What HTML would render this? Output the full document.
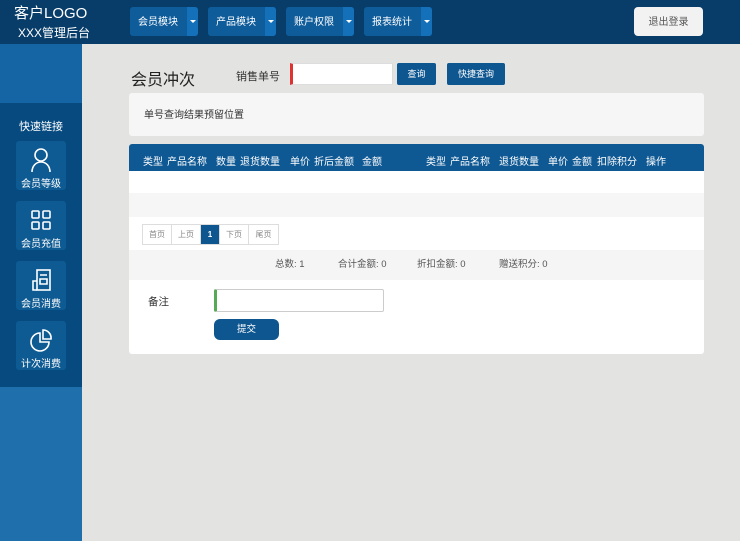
<!DOCTYPE html>
<html><head><meta charset="utf-8"><style>
*{margin:0;padding:0;box-sizing:border-box}
body{width:740px;height:541px;overflow:hidden;background:#e3e3e1;font-family:"Liberation Sans","Noto Sans CJK SC",sans-serif;position:relative;font-size:10px;color:#333}
.hdr{position:absolute;left:0;top:0;width:740px;height:44px;background:#083d69}
.logo{position:absolute;left:14px;top:6px;color:#fff;font-size:15px;line-height:16px}
.logo2{position:absolute;left:18px;top:24px;color:#fff;font-size:12px}
.nav{position:absolute;top:7px;height:29px;background:#0f5c9b;border-radius:3px;color:#fff;font-size:10px;line-height:31px;padding-left:8px}
.nav .ar{position:absolute;right:0;top:0;width:11px;height:29px;background:#1470b8;border-radius:0 3px 3px 0}
.nav .ar:after{content:"";position:absolute;left:3px;top:13px;border:3px solid transparent;border-top:3px solid #fff}
.logout{position:absolute;left:634px;top:7px;width:69px;height:29px;background:#f2f2f2;border-radius:4px;color:#555;font-size:10px;line-height:31px;text-align:center}
.side{position:absolute;left:0;top:44px;width:82px;height:497px;background:#1e6fab}
.sideTop{position:absolute;left:0;top:44px;width:82px;height:59px;background:#1565a5}
.panel{position:absolute;left:0;top:103px;width:82px;height:284px;background:#064a7f}
.ql{position:absolute;left:0;top:118px;width:82px;text-align:center;color:#fff;font-size:11px}
.btn{position:absolute;left:16px;width:50px;height:49px;background:#0e5a92;border-radius:3px;color:#fff;font-size:10px;text-align:center}
.btn svg{position:absolute;left:14px;top:6px}
.btn span{position:absolute;left:0;right:0;top:34px}
.title{position:absolute;left:131px;top:66px;font-size:16px;color:#222}
.lbl{position:absolute;left:236px;top:68px;font-size:11px}
.inp{position:absolute;left:290px;top:63px;width:103px;height:22px;background:#fff;border:1px solid #ddd;border-left:3px solid #d33}
.b1{position:absolute;top:63px;height:22px;background:#0e5690;color:#fff;font-size:9px;line-height:22px;text-align:center;border-radius:2px}
.box1{position:absolute;left:129px;top:93px;width:575px;height:43px;background:#f6f6f6;border-radius:3px;font-size:10px;line-height:46px;padding-left:15px}
.box2{position:absolute;left:129px;top:144px;width:575px;height:210px;background:#fff;border-radius:3px;overflow:hidden}
.th{height:27px;background:#0e5893;color:#fff;font-size:10px;position:relative}
.th span{position:absolute;top:9px}
.pg{position:absolute;top:80px;left:13px;display:flex;border:1px solid #ddd}
.pg div{width:29px;height:19px;font-size:8px;color:#888;line-height:19px;text-align:center;border-right:1px solid #ddd}
.pg div.a{background:#0e5690;color:#fff;width:19px;font-weight:bold}
.sum{position:absolute;top:106px;left:0;width:575px;height:30px;background:#f5f5f5;font-size:9.5px;color:#555}
.sum span{position:absolute;top:6px}
</style></head><body>
<div class="hdr">
<div class="logo">客户LOGO</div><div class="logo2">XXX管理后台</div>
<div class="nav" style="left:130px;width:68px">会员模块<div class="ar"></div></div>
<div class="nav" style="left:208px;width:68px">产品模块<div class="ar"></div></div>
<div class="nav" style="left:286px;width:68px">账户权限<div class="ar"></div></div>
<div class="nav" style="left:364px;width:68px">报表统计<div class="ar"></div></div>
<div class="logout">退出登录</div>
</div>
<div class="side"></div><div class="sideTop"></div><div class="panel"></div>
<div class="ql">快速链接</div>
<div class="btn" style="top:141px"><svg width="22" height="26" viewBox="0 0 22 26" fill="none" stroke="#fff" stroke-width="1.6"><circle cx="11" cy="8" r="6"/><path d="M2 25c0-6 4-10 9-10s9 4 9 10"/></svg><span>会员等级</span></div>
<div class="btn" style="top:201px"><svg width="22" height="26" viewBox="0 0 22 26" fill="none" stroke="#fff" stroke-width="1.6"><rect x="2" y="4" width="7" height="7" rx="1"/><rect x="13" y="4" width="7" height="7" rx="1"/><rect x="2" y="15" width="7" height="7" rx="1"/><rect x="13" y="15" width="7" height="7" rx="1"/></svg><span>会员充值</span></div>
<div class="btn" style="top:261px"><svg width="22" height="26" viewBox="0 0 22 26" fill="none" stroke="#fff" stroke-width="1.6"><rect x="7" y="3" width="13" height="20"/><path d="M7 14H3v9h4M10 8h7M10 12h7v5h-7z"/></svg><span>会员消费</span></div>
<div class="btn" style="top:321px"><svg width="22" height="26" viewBox="0 0 22 26" fill="none" stroke="#fff" stroke-width="1.6"><path d="M10 6a9 9 0 1 0 9 9h-9z"/><path d="M13 3v9h8a8 8 0 0 0-8-9z"/></svg><span>计次消费</span></div>
<div class="title">会员冲次</div>
<div class="lbl">销售单号</div>
<div class="inp"></div>
<div class="b1" style="left:397px;width:39px">查询</div>
<div class="b1" style="left:447px;width:58px">快捷查询</div>
<div class="box1">单号查询结果预留位置</div>
<div class="box2">
<div class="th"><span style="left:14px">类型</span><span style="left:38px">产品名称</span><span style="left:87px">数量</span><span style="left:111px">退货数量</span><span style="left:161px">单价</span><span style="left:185px">折后金额</span><span style="left:233px">金额</span><span style="left:297px">类型</span><span style="left:321px">产品名称</span><span style="left:370px">退货数量</span><span style="left:419px">单价</span><span style="left:443px">金额</span><span style="left:468px">扣除积分</span><span style="left:517px">操作</span></div>
<div style="position:absolute;top:49px;left:0;width:575px;height:24px;background:#f6f6f6"></div>
<div class="pg"><div>首页</div><div>上页</div><div class="a">1</div><div>下页</div><div style="border:none">尾页</div></div>
<div class="sum"><span style="left:146px">总数: 1</span><span style="left:209px">合计金额: 0</span><span style="left:288px">折扣金额: 0</span><span style="left:370px">赠送积分: 0</span></div>
<div style="position:absolute;left:19px;top:150px;font-size:10.5px">备注</div>
<div style="position:absolute;left:85px;top:145px;width:170px;height:23px;border:1px solid #ccc;border-left:3px solid #5a5;border-radius:2px"></div>
<div style="position:absolute;left:85px;top:175px;width:65px;height:21px;background:#0e5690;border-radius:6px;color:#fff;font-size:9.5px;text-align:center;line-height:21px">提交</div>
</div>
</body></html>
